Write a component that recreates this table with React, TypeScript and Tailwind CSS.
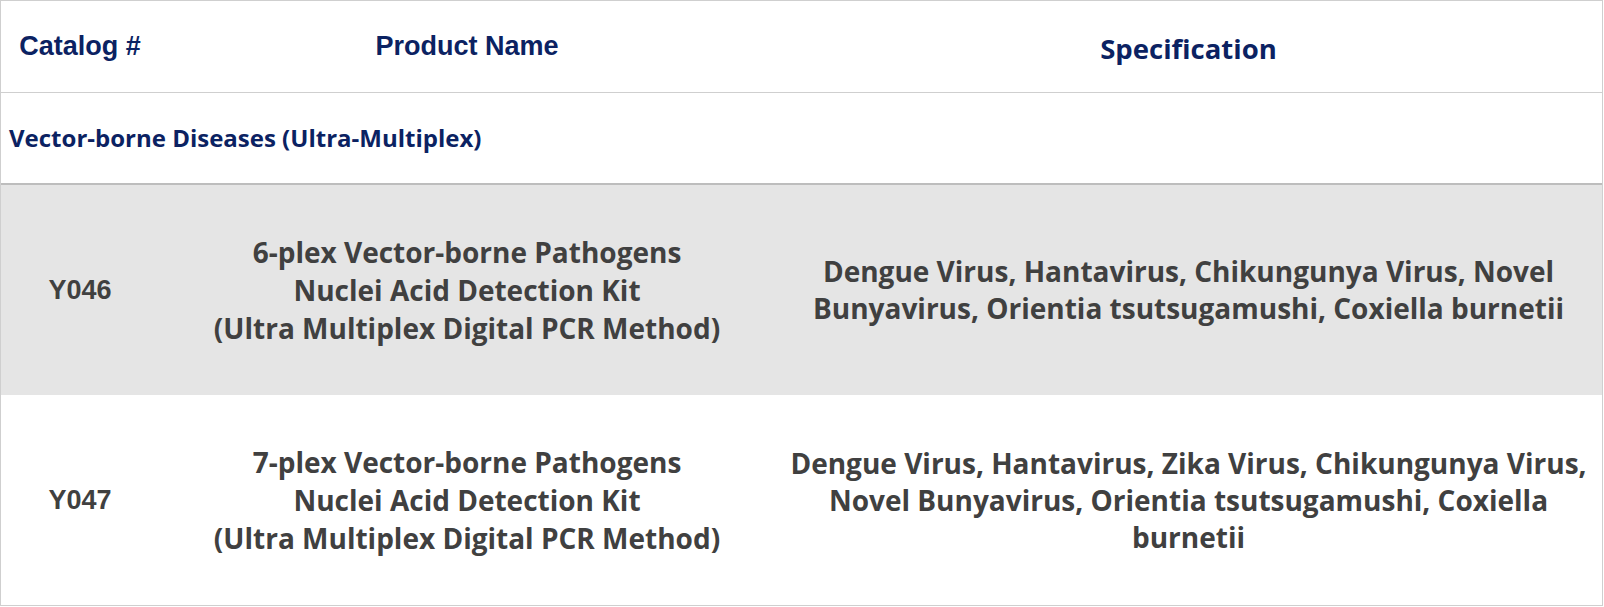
const navy = "text-[#0b2262]";

const rows = [
  {
    code: "Y046",
    name: ["6-plex Vector-borne Pathogens", "Nuclei Acid Detection Kit", "(Ultra Multiplex Digital PCR Method)"],
    spec: "Dengue Virus, Hantavirus, Chikungunya Virus, Novel Bunyavirus, Orientia tsutsugamushi, Coxiella burnetii",
    shaded: true,
  },
  {
    code: "Y047",
    name: ["7-plex Vector-borne Pathogens", "Nuclei Acid Detection Kit", "(Ultra Multiplex Digital PCR Method)"],
    spec: "Dengue Virus, Hantavirus, Zika Virus, Chikungunya Virus, Novel Bunyavirus, Orientia tsutsugamushi, Coxiella burnetii",
    shaded: false,
  },
];

export default function App() {
  return (
    <div className="w-[1603px] h-[606px] bg-white border border-[#cfcfcf] flex flex-col">
      {/* Header */}
      <div className="grid grid-cols-[158px_616px_1fr] h-[92px] border-b border-[#cfcfcf] items-center">
        <div className={`text-center font-['Liberation_Sans',Arial,sans-serif] font-bold text-[27px] ${navy}`}>Catalog #</div>
        <div className={`text-center font-['Liberation_Sans',Arial,sans-serif] font-bold text-[27px] ${navy}`}>Product Name</div>
        <div className={`text-center font-['Open_Sans',sans-serif] font-bold text-[27.5px] ${navy} pt-1`}>Specification</div>
      </div>

      {/* Section */}
      <div className="h-[92px] border-b-2 border-[#bdbdbd] flex items-center px-2">
        <span className={`font-['Open_Sans',sans-serif] font-bold text-[24px] ${navy}`}>Vector-borne Diseases (Ultra-Multiplex)</span>
      </div>

      {rows.map((r) => (
        <div
          key={r.code}
          className={`grid grid-cols-[158px_616px_1fr] h-[210px] items-center text-[#404040] ${r.shaded ? "bg-[#e5e5e5]" : "bg-white"}`}
        >
          <div className="text-center font-['Liberation_Sans',Arial,sans-serif] font-bold text-[27px]">{r.code}</div>
          <div className="text-center font-['Open_Sans',sans-serif] font-bold text-[28px] leading-[38px]">
            {r.name.map((l) => (
              <div key={l}>{l}</div>
            ))}
          </div>
          <div className="text-center font-['Open_Sans',sans-serif] font-bold text-[28px] leading-[37px] px-3">{r.spec}</div>
        </div>
      ))}
    </div>
  );
}
